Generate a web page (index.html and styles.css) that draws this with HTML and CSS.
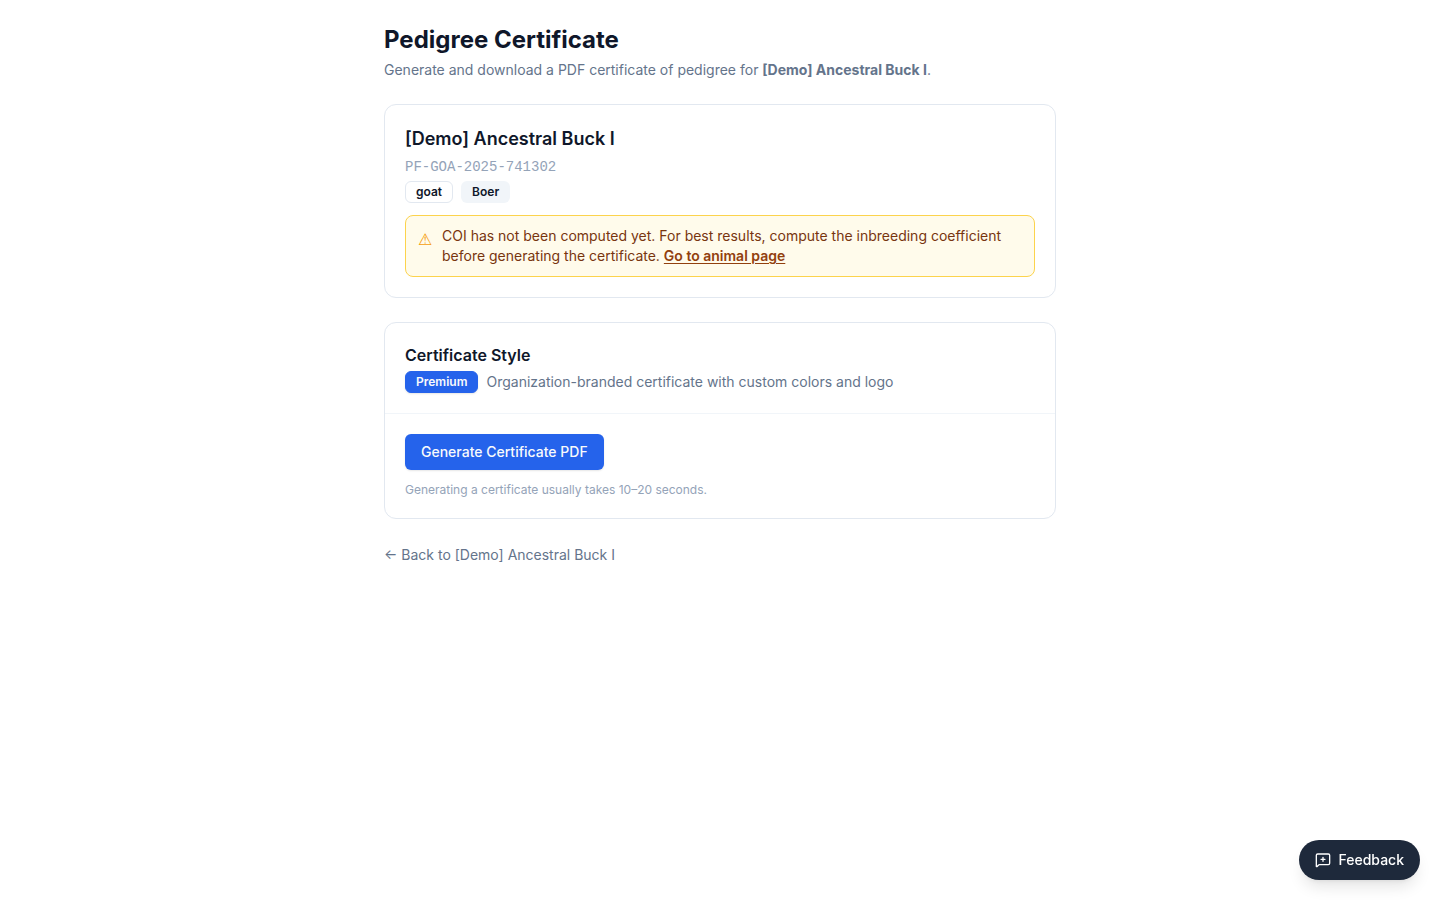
FILE: index.html
```
<!DOCTYPE html>
<html lang="en">

<head>
    <meta charset="UTF-8">
    <meta name="viewport" content="width=device-width, initial-scale=1.0">
    <title>Pedigree Certificate</title>
    <link rel="stylesheet" href="styles.css">
</head>

<body>
    <main class="page">
        <header>
            <h1>Pedigree Certificate</h1>
            <p class="subtitle">Generate and download a PDF certificate of pedigree for <strong>[Demo] Ancestral Buck I</strong>.</p>
        </header>

        <section class="card">
            <div class="card-body">
                <h2 class="animal-name">[Demo] Ancestral Buck I</h2>
                <p class="animal-id">PF-GOA-2025-741302</p>
                <div class="row">
                    <span class="badge badge-outline">goat</span>
                    <span class="badge badge-secondary">Boer</span>
                </div>
                <div class="alert">
                    <span class="alert-icon" aria-hidden="true">⚠</span>
                    <p>COI has not been computed yet. For best results, compute the inbreeding coefficient before generating the certificate. <a href="#animal">Go to animal page</a></p>
                </div>
            </div>
        </section>

        <section class="card">
            <div class="card-body">
                <h2 class="card-title">Certificate Style</h2>
                <div class="row">
                    <span class="badge badge-primary">Premium</span>
                    <span class="style-text">Organization-branded certificate with custom colors and logo</span>
                </div>
            </div>
            <div class="card-body card-actions">
                <button type="button" class="btn">Generate Certificate PDF</button>
                <p class="hint">Generating a certificate usually takes 10–20 seconds.</p>
            </div>
        </section>

        <a class="back" href="#animal">← Back to [Demo] Ancestral Buck I</a>
    </main>

    <button type="button" class="feedback">
        <svg viewBox="0 0 24 24" aria-hidden="true">
            <path d="M22 17a2 2 0 0 1-2 2H6.8a2 2 0 0 0-1.4.6l-2.2 2.2A.7.7 0 0 1 2 21.3V5a2 2 0 0 1 2-2h16a2 2 0 0 1 2 2z" />
            <path d="M12 8v6M9 11h6" />
        </svg>
        Feedback
    </button>
</body>

</html>
```

FILE: styles.css
```
* {
    box-sizing: border-box;
}

body {
    margin: 0;
    background: #fff;
    color: #0f172a;
    font-family: Inter, "Liberation Sans", sans-serif;
    font-size: 16px;
    line-height: 24px;
}

h1,
h2,
p {
    margin: 0;
}

.page {
    display: flex;
    flex-direction: column;
    gap: 24px;
    max-width: 720px;
    margin: 0 auto;
    padding: 24px;
}

h1 {
    font-size: 24px;
    line-height: 32px;
    font-weight: 700;
}

.subtitle {
    margin-top: 4px;
    color: #64748b;
    font-size: 14px;
    line-height: 20px;
}

.card {
    border: 1px solid #e2e8f0;
    border-radius: 12px;
    background: #fff;
}

.card-body {
    padding: 20px;
}

.card-actions {
    border-top: 1px solid #f1f5f9;
}

.animal-name {
    font-size: 18px;
    line-height: 28px;
    font-weight: 600;
}

.animal-id {
    margin-top: 4px;
    color: #94a3b8;
    font-family: "Liberation Mono", monospace;
    font-size: 14px;
    line-height: 20px;
}

.card-title {
    font-size: 16px;
    line-height: 24px;
    font-weight: 600;
}

.row {
    display: flex;
    flex-wrap: wrap;
    align-items: center;
    gap: 8px;
    margin-top: 4px;
}

.badge {
    padding: 2px 10px;
    border: 1px solid transparent;
    border-radius: 6px;
    font-size: 12px;
    line-height: 16px;
    font-weight: 600;
}

.badge-outline {
    border-color: #e2e8f0;
}

.badge-secondary {
    background: #f1f5f9;
}

.badge-primary {
    border-color: #2563eb;
    background: #2563eb;
    color: #f8fafc;
    box-shadow: 0 1px 2px rgba(0, 0, 0, 0.1);
}

.style-text {
    color: #64748b;
    font-size: 14px;
    line-height: 20px;
}

.alert {
    display: flex;
    gap: 10px;
    margin-top: 12px;
    padding: 10px 12px;
    border: 1px solid #fcd34d;
    border-radius: 8px;
    background: #fffbeb;
    color: #78350f;
    font-size: 14px;
    line-height: 20px;
}

.alert-icon {
    flex: none;
    width: 14px;
    margin-top: 2px;
    color: #f59e0b;
    font-family: "DejaVu Sans", sans-serif;
    font-size: 16px;
    line-height: 24px;
}

.alert a {
    color: #92400e;
    font-weight: 600;
    text-underline-offset: 2px;
}

.btn {
    height: 36px;
    padding: 8px 16px;
    border: none;
    border-radius: 6px;
    background: #2563eb;
    color: #f8fafc;
    font: 500 14px/20px Inter, "Liberation Sans", sans-serif;
    box-shadow: 0 1px 2px rgba(0, 0, 0, 0.1);
    cursor: pointer;
}

.hint {
    margin-top: 12px;
    color: #94a3b8;
    font-size: 12px;
    line-height: 16px;
}

.back {
    align-self: flex-start;
    color: #64748b;
    font-size: 14px;
    text-decoration: none;
}

.back:hover {
    text-decoration: underline;
}

.feedback {
    position: fixed;
    right: 20px;
    bottom: 20px;
    display: flex;
    align-items: center;
    gap: 8px;
    padding: 10px 16px;
    border: none;
    border-radius: 20px;
    background: #1e293b;
    color: #fff;
    font: 500 14px/20px Inter, "Liberation Sans", sans-serif;
    box-shadow: 0 10px 15px -3px rgba(0, 0, 0, 0.1), 0 4px 6px -4px rgba(0, 0, 0, 0.1);
    cursor: pointer;
}

.feedback svg {
    width: 16px;
    height: 16px;
    fill: none;
    stroke: currentColor;
    stroke-width: 2;
    stroke-linecap: round;
    stroke-linejoin: round;
}
```
